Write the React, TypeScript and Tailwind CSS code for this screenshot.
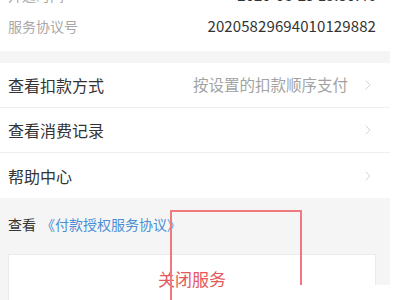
import { ChevronRight } from "lucide-react";

const font = { fontFamily: '"Noto Sans CJK SC", "Noto Sans", sans-serif' };

function MenuRow({ label, value, last }: { label: string; value?: string; last?: boolean }) {
  return (
    <div
      className={`flex h-[45px] items-center justify-between pl-2 pr-[14px] ${
        last ? "" : "border-b border-[#efefef]"
      }`}
    >
      <span className="text-[16px] text-[#333]">{label}</span>
      <div className="flex items-center gap-[12px]">
        {value && <span className="text-[15.5px] text-[#a3a3a3]">{value}</span>}
        <ChevronRight className="h-[16px] w-[16px] text-[#cacaca]" strokeWidth={1.25} />
      </div>
    </div>
  );
}

export default function App() {
  return (
    <div className="relative h-[300px] w-[400px] overflow-hidden bg-white" style={font}>
      <div className="w-[390px]">
        <div className="mt-[-19px] bg-white pb-[10px]">
          <div className="flex h-[29px] items-center justify-between pl-2 pr-[14px]">
            <span className="text-[14px] text-[#a8a8a8]">开通时间</span>
            <span className="text-[15px] text-[#333]">2020-08-29 15:30:46</span>
          </div>
          <div className="mt-[2px] flex h-[29px] items-center justify-between pl-2 pr-[14px]">
            <span className="text-[14px] text-[#a8a8a8]">服务协议号</span>
            <span className="text-[15px] tracking-[0.1px] text-[#333]">20205829694010129882</span>
          </div>
        </div>

        <div className="h-[12px] bg-[#f5f5f5]" />

        <div className="bg-white">
          <MenuRow label="查看扣款方式" value="按设置的扣款顺序支付" />
          <MenuRow label="查看消费记录" />
          <MenuRow label="帮助中心" last />
        </div>

        <div className="bg-[#f5f5f5] pl-2 pr-[14px] pt-[16px] pb-[4px]">
          <div className="flex items-center gap-[5px] text-[14px]">
            <span className="text-[#333]">查看</span>
            <span className="text-[#4a8fd6]">《付款授权服务协议》</span>
          </div>
          <div className="mt-[19px] flex h-[50px] items-center justify-center border border-[#ebebeb] bg-white">
            <span className="text-[17px] text-[#e5595c]">关闭服务</span>
          </div>
        </div>
      </div>

      <div className="absolute left-[170px] top-[210px] h-[100px] w-[132px] border-l-2 border-r-2 border-t-2 border-[#ee7a7e]" />
      <div className="absolute left-[287px] top-[285px] h-[20px] w-[113px] bg-white" />
    </div>
  );
}
